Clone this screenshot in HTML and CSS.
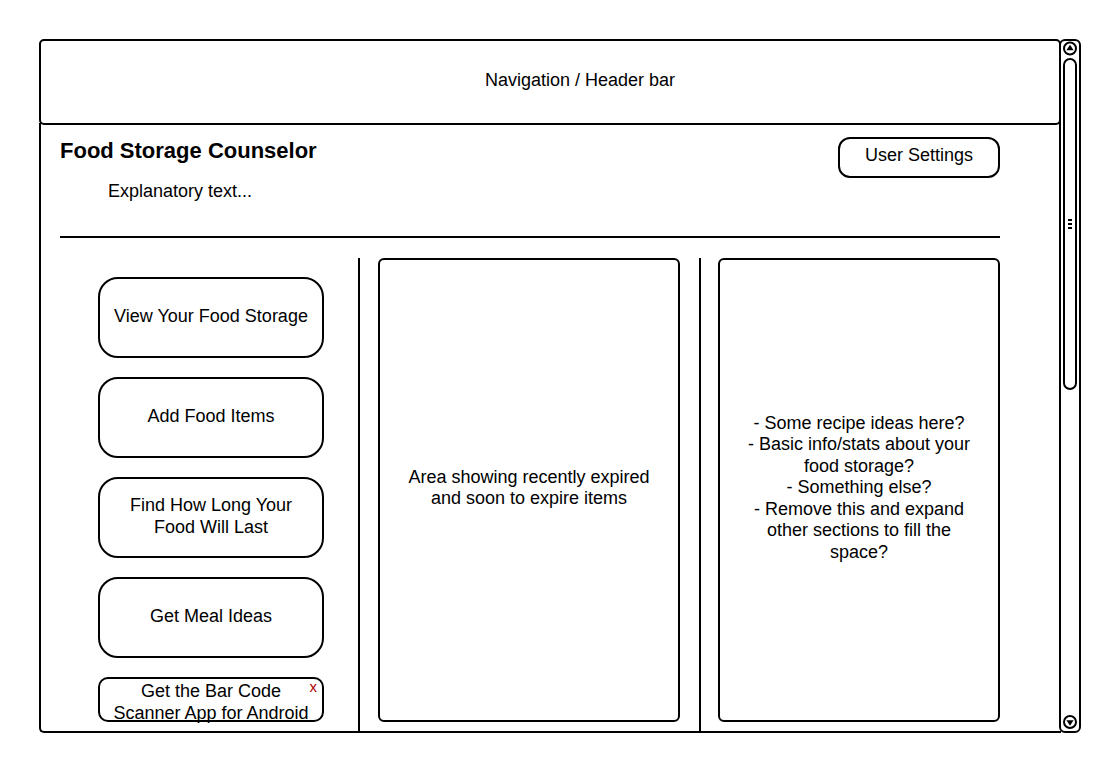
FILE: index.html
```html
<!DOCTYPE html>
<html>
<head>
<meta charset="utf-8">
<title>Food Storage Counselor</title>
<link rel="stylesheet" href="styles.css">
</head>
<body>
<div class="page">
  <div class="window">
    <div class="header">Navigation / Header bar</div>
    <div class="content">
      <div class="top-row">
        <div class="title">Food Storage Counselor</div>
        <div class="settings-btn">User Settings</div>
      </div>
      <div class="explain">Explanatory text...</div>
      <div class="rule"></div>
      <div class="columns">
        <div class="nav-col">
          <div class="nav-btn">View Your Food Storage</div>
          <div class="nav-btn">Add Food Items</div>
          <div class="nav-btn">Find How Long Your<br>Food Will Last</div>
          <div class="nav-btn">Get Meal Ideas</div>
          <div class="nav-btn app-btn">Get the Bar Code<br>Scanner App for Android<span class="close-x">x</span></div>
        </div>
        <div class="panel panel-mid">Area showing recently expired<br>and soon to expire items</div>
        <div class="divider"></div>
        <div class="panel panel-right">- Some recipe ideas here?<br>- Basic info/stats about your<br>food storage?<br>- Something else?<br>- Remove this and expand<br>other sections to fill the<br>space?</div>
      </div>
    </div>
  </div>
  <div class="scrollbar">
    <svg class="arrow" width="18" height="16" viewBox="0 0 18 16">
      <circle cx="9" cy="7.5" r="6" fill="none" stroke="#000" stroke-width="2"/>
      <polygon points="9,3.8 12.6,9.2 5.4,9.2" fill="#000"/>
    </svg>
    <div class="thumb">
      <div class="grip"><span></span><span></span><span></span></div>
    </div>
    <svg class="arrow arrow-down" width="18" height="16" viewBox="0 0 18 16">
      <circle cx="9" cy="8" r="6" fill="none" stroke="#000" stroke-width="2"/>
      <polygon points="5.4,6.3 12.6,6.3 9,11.7" fill="#000"/>
    </svg>
  </div>
</div>
</body>
</html>
```

FILE: styles.css
```css
* {
  box-sizing: border-box;
}

html, body {
  margin: 0;
  padding: 0;
  background: #fff;
}

body {
  font-family: "Liberation Sans", Arial, sans-serif;
  font-size: 18px;
  color: #000;
  width: 1120px;
  height: 772px;
  overflow: hidden;
}

.page {
  display: flex;
  padding: 39px 0 0 39px;
}

.window {
  width: 1022px;
  display: flex;
  flex-direction: column;
}

.header {
  height: 86px;
  border: 2px solid #000;
  border-radius: 5px;
  display: flex;
  align-items: center;
  justify-content: center;
  padding-left: 60px;
  padding-bottom: 4px;
  line-height: 22px;
}

.content {
  margin-top: -2px;
  height: 610px;
  border-left: 2px solid #000;
  border-bottom: 2px solid #000;
  border-bottom-left-radius: 5px;
  padding: 14px 61px 0 19px;
  display: flex;
  flex-direction: column;
}

.top-row {
  display: flex;
  justify-content: space-between;
  align-items: flex-start;
}

.title {
  margin-top: 1px;
  font-size: 22px;
  font-weight: bold;
  line-height: 26px;
}

.settings-btn {
  width: 162px;
  height: 41px;
  border: 2px solid #000;
  border-radius: 12px;
  text-align: center;
  padding-top: 6px;
  line-height: 21px;
}

.explain {
  margin-top: 3px;
  margin-left: 48px;
  line-height: 21px;
}

.rule {
  margin-top: 34px;
  height: 2px;
  background: #000;
}

.columns {
  margin-top: 20px;
  flex: 1;
  display: flex;
  align-items: flex-start;
}

.nav-col {
  align-self: stretch;
  width: 300px;
  border-right: 2px solid #000;
  padding: 19px 0 0 38px;
  display: flex;
  flex-direction: column;
  gap: 19px;
}

.nav-btn {
  position: relative;
  width: 226px;
  height: 81px;
  border: 2px solid #000;
  border-radius: 20px;
  display: flex;
  align-items: center;
  justify-content: center;
  text-align: center;
  line-height: 22px;
  padding-bottom: 4px;
}

.app-btn {
  height: 45px;
  border-radius: 10px;
  padding-top: 5px;
  padding-bottom: 0;
  white-space: nowrap;
}

.close-x {
  position: absolute;
  top: 0;
  right: 5px;
  font-size: 15px;
  line-height: 16px;
  color: #b00000;
}

.panel {
  height: 464px;
  border: 2px solid #000;
  border-radius: 6px;
  display: flex;
  align-items: center;
  justify-content: center;
  text-align: center;
  line-height: 21.5px;
  padding-bottom: 4px;
}

.panel-mid {
  margin-left: 18px;
  width: 302px;
}

.divider {
  align-self: stretch;
  width: 2px;
  background: #000;
  margin-left: 19px;
}

.panel-right {
  margin-left: 17px;
  width: 282px;
}

.scrollbar {
  margin-left: -2px;
  width: 22px;
  height: 694px;
  border: 2px solid #000;
  border-radius: 6px;
  display: flex;
  flex-direction: column;
}

.arrow {
  display: block;
  flex: none;
}

.thumb {
  margin: 1px 0 0 2px;
  width: 14px;
  height: 332px;
  border: 2px solid #000;
  border-radius: 7px;
  display: flex;
  align-items: center;
  justify-content: center;
}

.grip {
  display: flex;
  flex-direction: column;
  gap: 2px;
}

.grip span {
  display: block;
  width: 4px;
  height: 2px;
  background: #000;
}

.arrow-down {
  margin-top: auto;
  margin-bottom: 1px;
}
```
